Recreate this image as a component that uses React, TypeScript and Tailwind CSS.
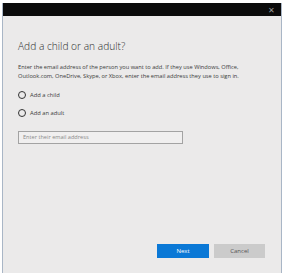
export default function App() {
  return (
    <div className="h-[273px] w-[285px] bg-white pl-[2px] pr-[3px] pt-[3px] font-['Open_Sans','Noto_Sans',sans-serif]">
      <div className="flex h-full flex-col border-x border-x-[#a9b6c6] bg-[#ebeaea]">
        <div className="flex h-[13px] shrink-0 items-center justify-end bg-[#0b0b0b] pr-[6px]">
          <span className="text-[8px] leading-none text-[#9a9a9a]">✕</span>
        </div>
        <div className="flex flex-1 flex-col pl-[15px] pr-[12px]">
          <h1 className="mt-[23px] text-[10.2px] font-light leading-[14px] text-[#2a2a2a]">
            Add a child or an adult?
          </h1>
          <p className="mt-[10px] text-[5.7px] leading-[9px] text-[#3a3a3a]">
            Enter the email address of the person you want to add. If they use Windows, Office,
            <br />
            Outlook.com, OneDrive, Skype, or Xbox, enter the email address they use to sign in.
          </p>
          <div className="mt-[10px] flex flex-col gap-[10px]">
            {["Add a child", "Add an adult"].map((label) => (
              <label key={label} className="flex items-center gap-[4px]">
                <span className="h-[8px] w-[8px] rounded-full border border-[#333]" />
                <span className="text-[5.8px] leading-[8px] text-[#3a3a3a]">{label}</span>
              </label>
            ))}
          </div>
          <div className="mt-[14px] flex h-[13px] w-[165px] items-center border border-[#a3a3a3] bg-[#f0efef] px-[4px]">
            <span className="text-[5.6px] leading-none text-[#8a8a8a]">Enter their email address</span>
          </div>
          <div className="mt-auto mb-[15px] flex justify-end gap-[5px] pr-[4px]">
            <button className="flex h-[14px] w-[52px] items-center justify-center bg-[#0a78d6] text-[6px] text-white">
              Next
            </button>
            <button className="flex h-[14px] w-[51px] items-center justify-center bg-[#cbcbcb] text-[6px] text-[#555]">
              Cancel
            </button>
          </div>
        </div>
      </div>
    </div>
  );
}
